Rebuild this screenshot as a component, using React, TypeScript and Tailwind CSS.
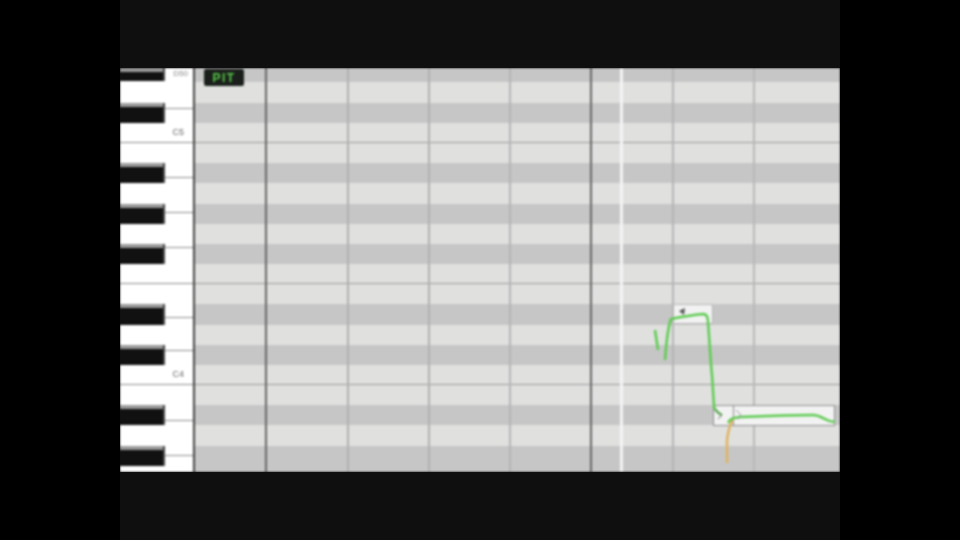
import React from 'react';

// pitch rows, top to bottom
const rows = [
  { h: 14, dark: true }, { h: 21, dark: false }, { h: 20, dark: true }, { h: 20, dark: false, line: true },
  { h: 20, dark: false }, { h: 20, dark: true }, { h: 21, dark: false }, { h: 20, dark: true },
  { h: 20, dark: false }, { h: 20, dark: true }, { h: 20, dark: false, line: true }, { h: 20, dark: false },
  { h: 21, dark: true }, { h: 20, dark: false }, { h: 20, dark: true }, { h: 20, dark: false, line: true },
  { h: 20, dark: false }, { h: 20, dark: true }, { h: 21, dark: false }, { h: 26, dark: true },
];

// piano column: black key rows carry the white key divider to their right
const keys = [
  { h: 13, black: true, line: 0 }, { h: 22, black: false, line: 0 },
  { h: 20, black: true, line: 6 }, { h: 20, black: false, line: 20, full: true, label: 'C5' },
  { h: 20, black: false, line: 0 }, { h: 20, black: true, line: 15 }, { h: 21, black: false, line: 0 },
  { h: 20, black: true, line: 9 }, { h: 20, black: false, line: 0 }, { h: 20, black: true, line: 4 },
  { h: 20, black: false, line: 20, full: true }, { h: 20, black: false, line: 0 },
  { h: 21, black: true, line: 14 }, { h: 20, black: false, line: 0 }, { h: 20, black: true, line: 6 },
  { h: 20, black: false, line: 20, full: true, label: 'C4' }, { h: 20, black: false, line: 0 },
  { h: 20, black: true, line: 16 }, { h: 21, black: false, line: 0 }, { h: 20, black: true, line: 10 },
  { h: 6, black: false, line: 0 },
];

// measure lines inside the roll, offsets from its left edge
const bars = [
  { x: 70, cls: 'w-[2px] bg-[#666]' }, { x: 152, cls: 'w-[2px] bg-[#b0b0b0]' }, { x: 233, cls: 'w-[2px] bg-[#b0b0b0]' },
  { x: 314, cls: 'w-[2px] bg-[#b4b4b4]' }, { x: 395, cls: 'w-[2px] bg-[#666]' }, { x: 477, cls: 'w-[2px] bg-[#b4b4b4]' },
  { x: 558, cls: 'w-[2px] bg-[#b8b8b8]' },
];

function PianoKeys() {
  return (
    <div className="relative flex h-full w-[73px] shrink-0 flex-col overflow-hidden bg-white">
      {keys.map((k, i) => (
        <div key={i} className="flex shrink-0" style={{ height: k.h }}>
          {k.black ? (
            <div className="h-full w-[45px] shrink-0 border-r-2 border-[#444] bg-[#111]">
              <div className="h-[4px] bg-[#9a9a9a]" />
            </div>
          ) : (
            <div className={k.full ? 'w-[45px] shrink-0 border-b border-[#8a8a8a]' : 'w-[45px] shrink-0'} />
          )}
          <div className="relative flex-1">
            {k.line > 0 && <div className="border-b border-[#8a8a8a]" style={{ height: k.line }} />}
            {k.label && (
              <span className="absolute right-[9px] top-[5px] font-['Liberation_Sans',sans-serif] text-[9px] leading-[9px] text-[#666]">
                {k.label}
              </span>
            )}
          </div>
        </div>
      ))}
      <span className="absolute right-[5px] top-[1px] font-['Liberation_Sans',sans-serif] text-[8px] leading-[9px] text-[#888]">
        D50
      </span>
    </div>
  );
}

function PitchCurve() {
  return (
    <svg className="absolute inset-0 h-full w-full" viewBox="0 0 645 404" fill="none">
      <path d="M532 395 L532 372 C533 364 535 356 538 351" stroke="#e0b262" strokeWidth="2.5" />
      <path d="M460 262 L463 282" stroke="#5ccb50" strokeWidth="2.5" />
      <path d="M470 292 C471 280 472 262 476 251 C486 249 498 247 508 246 C512 246 513 250 513 254 C515 280 516 300 517 307 L519 339 C521 343 524 346 527 347"
        stroke="#5ccb50" strokeWidth="2.5" strokeLinejoin="round" />
      <path d="M533 355 C535 351 537 350 545 349 C570 348 600 347 618 347 C623 347 628 350 630 351 C633 353 636 354 640 354"
        stroke="#5ccb50" strokeWidth="2.5" strokeLinejoin="round" />
      <path d="M484 243 L490 240 L489 247 Z" fill="#555" />
      <path d="M520 342 L527 347 L523 351" stroke="#666" strokeWidth="1" />
      <path d="M541 342 L546 347 L543 351" stroke="#999" strokeWidth="1" />
    </svg>
  );
}

function PianoRoll() {
  return (
    <div className="relative h-full flex-1 overflow-hidden border-l-2 border-[#444]">
      <div className="flex h-full flex-col">
        {rows.map((r, i) => (
          <div
            key={i}
            className={`${r.dark ? 'bg-[#c6c6c6]' : 'bg-[#e0e1df]'} ${r.line ? 'border-b border-[#999]' : ''} shrink-0`}
            style={{ height: r.h }}
          />
        ))}
      </div>
      {bars.map((b) => (
        <div key={b.x} className={`absolute inset-y-0 ${b.cls}`} style={{ left: b.x }} />
      ))}
      {/* playhead */}
      <div className="absolute inset-y-0 left-[425px] w-[3px] bg-[#f4f4f4]" />
      {/* notes */}
      <div className="absolute left-[478px] top-[236px] h-[20px] w-[40px] border border-[#b5b5b5] bg-[#f2f2f2]" />
      <div className="absolute left-[518px] top-[337px] h-[21px] w-[21px] border border-[#8d8d8d] bg-[#f2f2f2]" />
      <div className="absolute left-[538px] top-[337px] h-[21px] w-[102px] border border-[#8d8d8d] bg-[#f2f2f2]" />
      <PitchCurve />
      <div className="absolute left-[9px] top-[1px] flex h-[17px] w-[40px] items-center justify-center rounded-[2px] bg-[#1a1f1b]">
        <span className="font-['Liberation_Sans',sans-serif] text-[12px] font-bold leading-none tracking-[1.5px] text-[#58c94a]">
          PIT
        </span>
      </div>
    </div>
  );
}

export default function App() {
  return (
    <div className="flex h-[540px] w-[960px] justify-center overflow-hidden bg-black">
      <div className="flex h-full w-[720px] flex-col bg-[#0f0f0f]">
        <div className="h-[68px] shrink-0" />
        <div className="flex h-[404px] shrink-0 overflow-hidden">
          <div className="flex h-full w-full blur-[0.8px]">
            <PianoKeys />
            <PianoRoll />
          </div>
        </div>
        <div className="flex-1" />
      </div>
    </div>
  );
}
